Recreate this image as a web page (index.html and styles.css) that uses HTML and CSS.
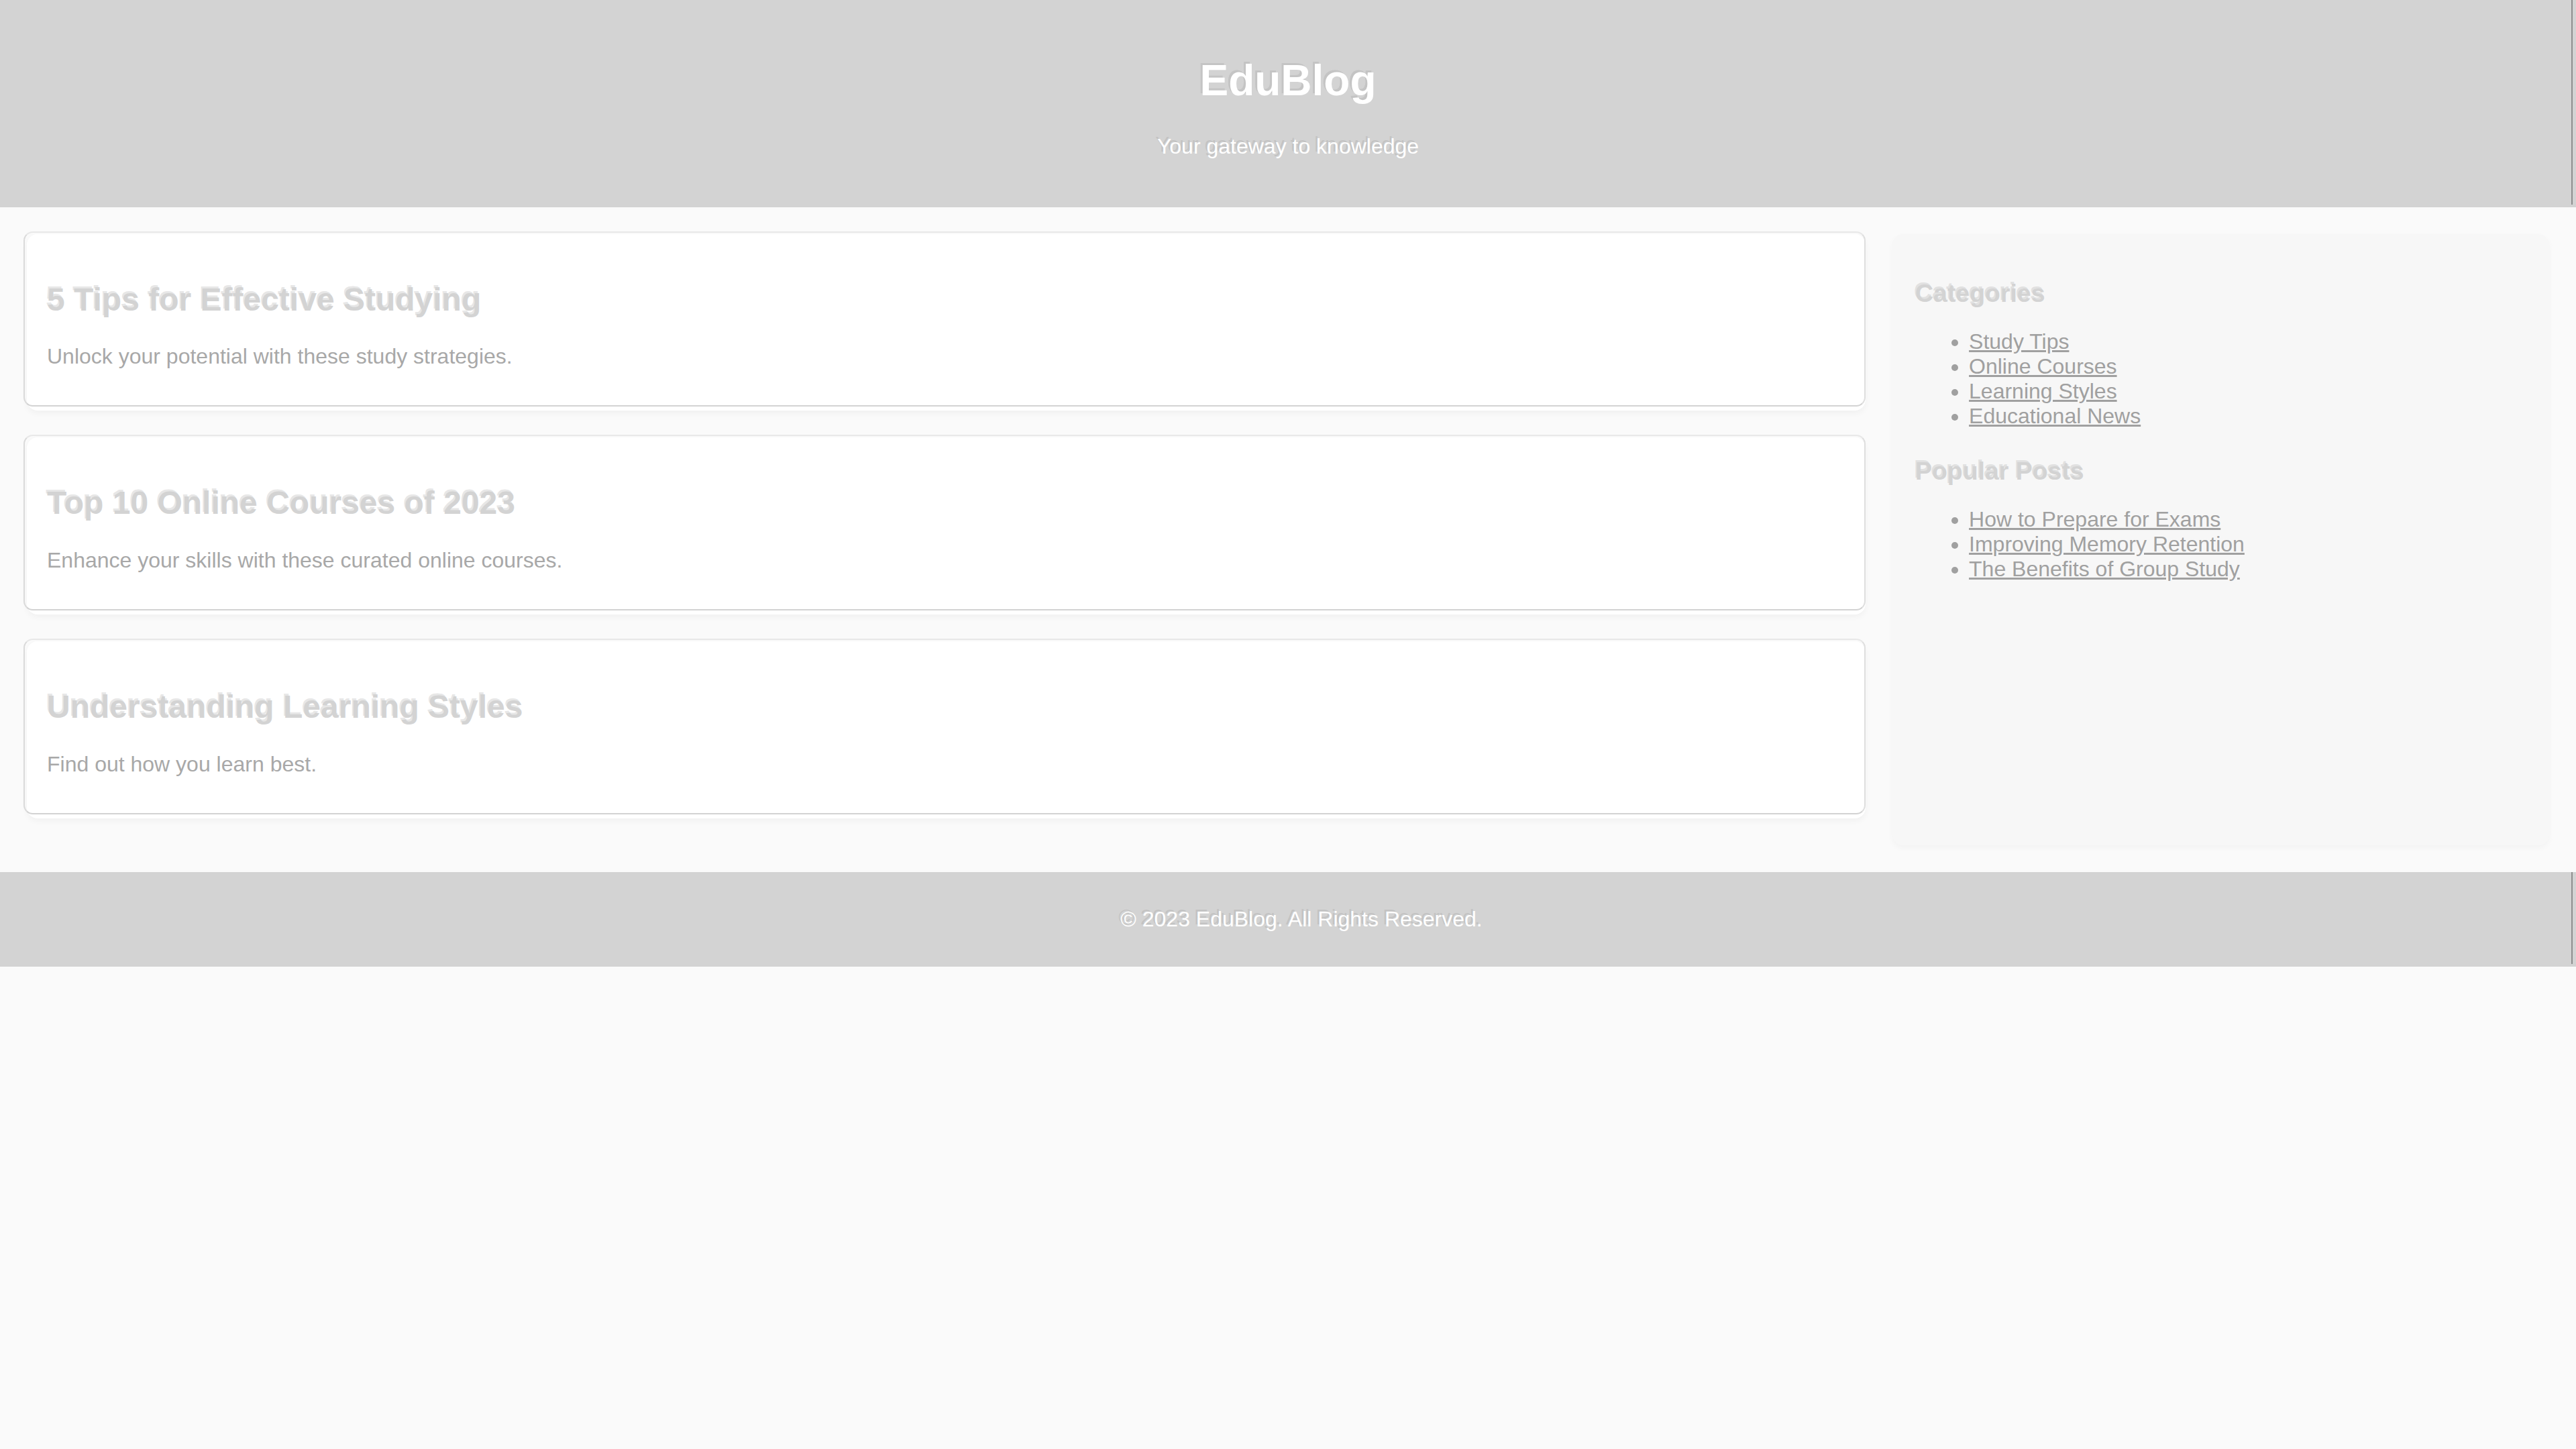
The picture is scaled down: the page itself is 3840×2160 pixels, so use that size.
FILE: index.html
```html
<!DOCTYPE html>
<html lang="en">
<head>
<meta charset="utf-8">
<title>EduBlog</title>
<link rel="stylesheet" href="styles.css">
</head>
<body>
<header class="site-header">
  <h1 class="site-title">EduBlog</h1>
  <p class="site-tagline">Your gateway to knowledge</p>
</header>
<div class="container">
  <main class="posts">
    <article class="post">
      <h2 class="post-title">5 Tips for Effective Studying</h2>
      <p class="post-excerpt">Unlock your potential with these study strategies.</p>
    </article>
    <article class="post">
      <h2 class="post-title">Top 10 Online Courses of 2023</h2>
      <p class="post-excerpt">Enhance your skills with these curated online courses.</p>
    </article>
    <article class="post">
      <h2 class="post-title">Understanding Learning Styles</h2>
      <p class="post-excerpt">Find out how you learn best.</p>
    </article>
  </main>
  <aside class="sidebar">
    <h3 class="sidebar-title">Categories</h3>
    <ul class="sidebar-list">
      <li><a href="#">Study Tips</a></li>
      <li><a href="#">Online Courses</a></li>
      <li><a href="#">Learning Styles</a></li>
      <li><a href="#">Educational News</a></li>
    </ul>
    <h3 class="sidebar-title">Popular Posts</h3>
    <ul class="sidebar-list">
      <li><a href="#">How to Prepare for Exams</a></li>
      <li><a href="#">Improving Memory Retention</a></li>
      <li><a href="#">The Benefits of Group Study</a></li>
    </ul>
  </aside>
</div>
<footer class="site-footer">
  <p class="footer-text">&copy; 2023 EduBlog. All Rights Reserved.</p>
</footer>
</body>
</html>
```

FILE: styles.css
```css
html, body {
  margin: 0;
  padding: 0;
}

body {
  font-family: "Liberation Sans", Arial, sans-serif;
  font-size: 32px;
  background: #fafafa;
  color: #a9a9a9;
}

.site-header {
  position: relative;
  background: #d3d3d3;
  color: #ffffff;
  text-align: center;
  padding: 40px;
}

.site-header::after,
.site-footer::after {
  content: "";
  position: absolute;
  top: 0;
  bottom: 4px;
  right: 5px;
  width: 2px;
  background: #8e8e8e;
}

.site-title {
  font-size: 64px;
  font-weight: bold;
  margin: 0.67em 0;
  text-shadow: -3px -3px 0 rgba(150, 150, 150, 0.25);
}

.site-tagline {
  margin: 32px 0;
  text-shadow: -3px -3px 0 rgba(150, 150, 150, 0.25);
}

.container {
  display: grid;
  grid-template-columns: minmax(0, 2.8fr) minmax(0, 1fr);
  gap: 40px;
  padding: 40px;
}

.posts {
  display: flex;
  flex-direction: column;
}

.post {
  position: relative;
  background: #ffffff;
  border-radius: 16px;
  padding: 30px;
  margin-bottom: 40px;
  box-shadow: 0 4px 10px rgba(0, 0, 0, 0.04);
}

.post::before {
  content: "";
  position: absolute;
  top: -4px;
  left: -5px;
  right: 0;
  bottom: 6px;
  border-top: 2px solid #e8e8e8;
  border-left: 2px solid #dadada;
  border-bottom: 2px solid #d3d3d3;
  border-right: 2px solid #dedede;
  border-radius: 14px;
  pointer-events: none;
}

.post-title {
  font-size: 48px;
  font-weight: bold;
  margin: 0.83em 0;
  color: #d3d3d3;
  text-shadow: -2px -3px 0 rgba(170, 170, 170, 0.3);
}

.post-excerpt {
  margin: 32px 0;
  color: #a8a8a8;
}

.sidebar {
  background: #f7f7f7;
  border-radius: 16px;
  padding: 30px 30px 30px 34px;
  box-shadow: 0 4px 10px rgba(0, 0, 0, 0.03);
}

.sidebar-title {
  font-size: 1.17em;
  font-weight: bold;
  margin: 37px 0 26px;
  color: #d3d3d3;
  text-shadow: -2px -3px 0 rgba(170, 170, 170, 0.3);
}

.sidebar-list {
  margin: 32px 0 42px;
  padding-left: 80px;
  color: #a0a0a0;
}

.sidebar-list a {
  color: #a0a0a0;
  text-decoration: underline;
}

.site-footer {
  position: relative;
  background: #d3d3d3;
  color: #ffffff;
  text-align: center;
  padding: 20px 0 20px 40px;
}

.footer-text {
  margin: 32px 0;
  text-shadow: -3px -3px 0 rgba(150, 150, 150, 0.25);
}
```
